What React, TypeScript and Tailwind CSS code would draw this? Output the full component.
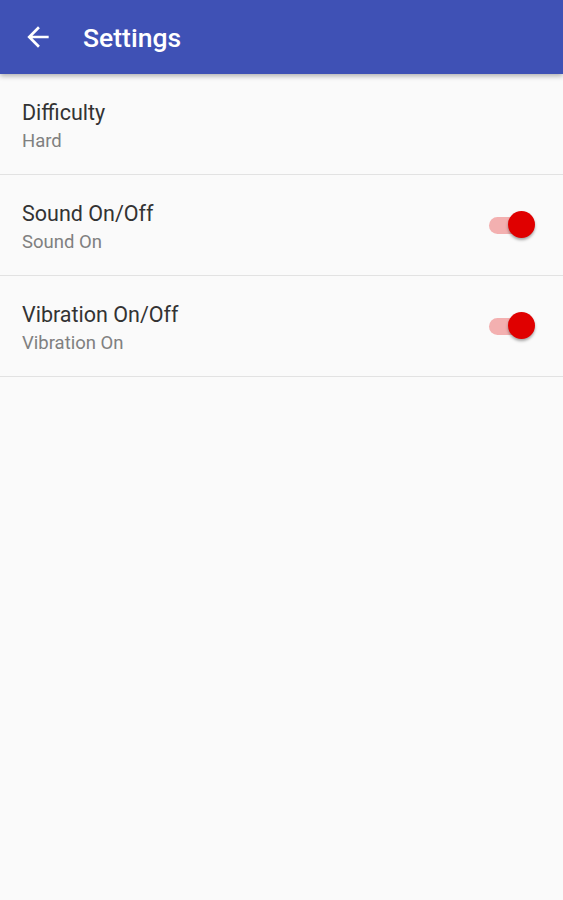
import React from "react";

function Toggle() {
  return (
    <div className="relative w-[46px] h-[28px] flex items-center">
      <div className="w-[42px] h-[17px] ml-[2px] rounded-full bg-[#f3b0b0]" />
      <div className="absolute right-[-2px] top-[0px] w-[27px] h-[27px] rounded-full bg-[#e00000] shadow-[0_2px_3px_rgba(0,0,0,0.35)]" />
    </div>
  );
}

function Row({ title, sub, toggle }: { title: string; sub: string; toggle?: boolean }) {
  return (
    <div className="h-[101px] border-b border-[#e2e2e2] flex items-center pl-[22px] pr-[30px]">
      <div className="flex-1 flex flex-col pt-[5px]">
        <div className="text-[21.5px] leading-[27px] text-[#333333]">{title}</div>
        <div className="text-[18.5px] leading-[25px] mt-[3px] text-[#808080]">{sub}</div>
      </div>
      {toggle && <Toggle />}
    </div>
  );
}

export default function App() {
  return (
    <div className="w-[563px] h-[900px] bg-[#fafafa] overflow-hidden" style={{ fontFamily: "Roboto, 'Noto Sans', sans-serif" }}>
      <div className="relative z-10 h-[74px] bg-[#3f51b5] flex items-center shadow-[0_2px_5px_rgba(0,0,0,0.3)]">
        <div className="w-[83px] flex pl-[22px]">
          <svg width="32" height="32" viewBox="0 0 24 24">
            <path d="M20 11H7.83l5.59-5.59L12 4l-8 8 8 8 1.41-1.41L7.83 13H20v-2z" fill="#ffffff" />
          </svg>
        </div>
        <div className="text-white text-[26.5px] font-medium leading-[32px] pt-[2px]">Settings</div>
      </div>
      <Row title="Difficulty" sub="Hard" />
      <Row title="Sound On/Off" sub="Sound On" toggle />
      <Row title="Vibration On/Off" sub="Vibration On" toggle />
    </div>
  );
}
